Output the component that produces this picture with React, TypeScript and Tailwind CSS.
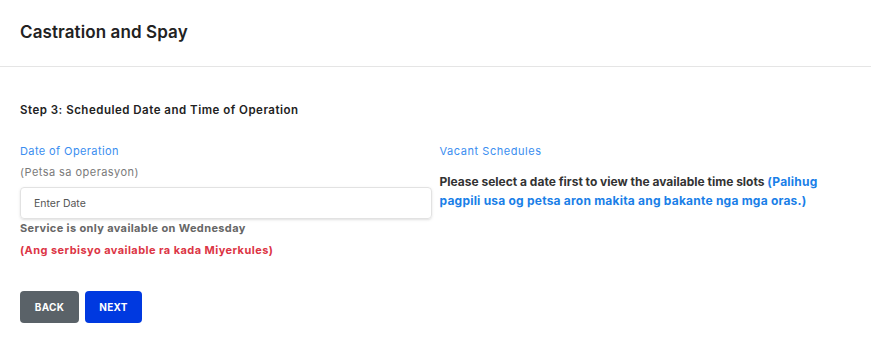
export default function App() {
  return (
    <div className="min-h-screen bg-white font-['Inter',sans-serif] text-[#212529]">
      <div className="flex h-[67px] items-center border-b border-[#e5e5e5] px-5">
        <h1 className="text-[17px] font-semibold tracking-[0.1px] text-[#222]">Castration and Spay</h1>
      </div>

      <div className="px-5 pt-[35px]">
        <p className="text-[11.5px] font-semibold leading-4 tracking-[0.5px] text-[#222]">
          Step 3: Scheduled Date and Time of Operation
        </p>

        <div className="mt-[23px] grid grid-cols-2 gap-2">
          <div>
            <p className="text-[11px] leading-[21px] tracking-[0.4px] text-[#3a8ef0]">Date of Operation</p>
            <p className="text-[11px] leading-[21px] tracking-[0.45px] text-[#7a7a7a]">(Petsa sa operasyon)</p>
            <input
              type="text"
              placeholder="Enter Date"
              className="mt-[4px] h-[32px] w-full rounded border border-[#e2e2e2] px-[13px] text-[10.5px] shadow-sm outline-none placeholder:text-[#555]"
            />
            <p className="mt-[1px] text-[11px] font-bold leading-4 tracking-[0.37px] text-[#666]">
              Service is only available on Wednesday
            </p>
            <p className="mt-[6px] text-[11px] font-bold leading-4 tracking-[0.44px] text-[#dc3545]">
              (Ang serbisyo available ra kada Miyerkules)
            </p>
          </div>

          <div>
            <p className="text-[11px] leading-[21px] tracking-[0.55px] text-[#3a8ef0]">Vacant Schedules</p>
            <p className="mt-[10px] text-[12px] font-bold leading-[19px] text-[#333]">
              Please select a date first to view the available time slots{' '}
              <span className="tracking-[0.22px] text-[#1a7fe8]">
                (Palihug pagpili usa og petsa aron makita ang bakante nga mga oras.)
              </span>
            </p>
          </div>
        </div>

        <div className="mt-[33px] flex gap-[6px]">
          <button className="h-[32px] w-[59px] rounded bg-[#5a6268] text-[10px] font-bold tracking-[0.3px] text-white">BACK</button>
          <button className="h-[32px] w-[57px] rounded bg-[#0039e0] text-[10px] font-bold tracking-[0.3px] text-white">NEXT</button>
        </div>
      </div>
    </div>
  );
}
